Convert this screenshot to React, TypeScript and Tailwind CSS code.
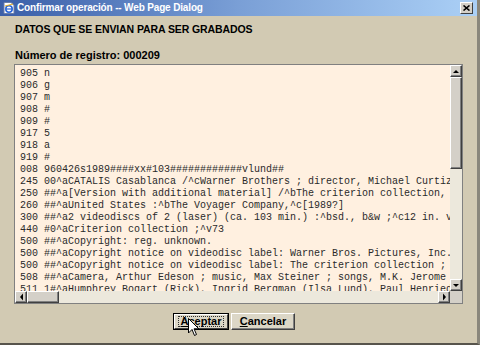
import React from "react";

const lines = [
  "905 n",
  "906 g",
  "907 m",
  "908 #",
  "909 #",
  "917 5",
  "918 a",
  "919 #",
  "008 960426s1989####xx#103############vlund##",
  "245 00^aCATALIS Casablanca /^cWarner Brothers ; director, Michael Curtiz ; screenplay",
  "250 ##^a[Version with additional material] /^bThe criterion collection, 1989",
  "260 ##^aUnited States :^bThe Voyager Company,^c[1989?]",
  "300 ##^a2 videodiscs of 2 (laser) (ca. 103 min.) :^bsd., b&w ;^c12 in. v",
  "440 #0^aCriterion collection ;^v73",
  "500 ##^aCopyright: reg. unknown.",
  "500 ##^aCopyright notice on videodisc label: Warner Bros. Pictures, Inc. 1942",
  "500 ##^aCopyright notice on videodisc label: The criterion collection ; 1989",
  "508 ##^aCamera, Arthur Edeson ; music, Max Steiner ; songs, M.K. Jerome",
  "511 1#^aHumphrey Bogart (Rick), Ingrid Bergman (Ilsa Lund), Paul Henried",
];

const btn3d =
  "border border-t-white border-l-white border-r-[#404040] border-b-[#404040] shadow-[inset_-1px_-1px_0_#808080] bg-[#d4d0c8]";

function Arrow({ dir }: { dir: "up" | "down" | "left" | "right" }) {
  const pts: Record<string, string> = {
    up: "1,4 4,1 7,4",
    down: "1,1 4,4 7,1",
    left: "4,0.5 1,4 4,7.5",
    right: "1,0.5 4,4 1,7.5",
  };
  const w = dir === "up" || dir === "down" ? 8 : 5;
  const h = dir === "up" || dir === "down" ? 5 : 8;
  return (
    <svg width={w} height={h} viewBox={`0 0 ${w} ${h}`}>
      <polygon points={pts[dir]} fill="#000" />
    </svg>
  );
}

export default function App() {
  return (
    <div
      className="relative w-[480px] h-[345px] overflow-hidden bg-[#d2cab3] flex flex-col border-r-[3px] border-r-[#8a877c] border-b-[2px] border-b-[#57544c]"
      style={{ fontFamily: '"Liberation Sans", Arial, sans-serif' }}
    >
      {/* title bar */}
      <div className="h-[16px] shrink-0 flex items-center bg-gradient-to-r from-[#3a5ea8] via-[#7a9fd6] to-[#abd0f6] pl-[3px] pr-[4px]">
        <svg width="12" height="12" viewBox="0 0 12 12" className="shrink-0">
          <path d="M1 0.5h7l3 3v8H1z" fill="#fff" stroke="#6a7da8" strokeWidth="1" />
          <circle cx="6" cy="7" r="3.2" fill="none" stroke="#2a66d8" strokeWidth="1.6" />
          <path d="M3 7h6" stroke="#2a66d8" strokeWidth="1.2" />
          <path d="M2 4 L10 2" stroke="#e7b020" strokeWidth="1" />
        </svg>
        <span className="ml-[2px] text-white text-[10px] font-bold leading-none tracking-[-0.15px]">
          Confirmar operación -- Web Page Dialog
        </span>
        <div className="ml-auto w-[13px] h-[12px] flex items-center justify-center border border-t-white border-l-white border-r-[#404040] border-b-[#404040] bg-[#d4d0c8]">
          <svg width="7" height="6" viewBox="0 0 7 6">
            <path d="M0.5 0.5 L6.5 5.5 M6.5 0.5 L0.5 5.5" stroke="#000" strokeWidth="1.6" />
          </svg>
        </div>
      </div>

      {/* body */}
      <div className="flex flex-col pl-[14px] pr-[13px]">
        <div className="mt-[6px] ml-[1px] h-[14px] text-[10.5px] font-bold leading-[14px] tracking-[-0.1px] text-black">
          DATOS QUE SE ENVIAN PARA SER GRABADOS
        </div>
        <div className="mt-[12px] ml-[1px] h-[14px] text-[11px] font-bold leading-[14px] text-black">
          Número de registro: 000209
        </div>

        {/* text area */}
        <div className="mt-[2px] w-[449px] h-[240px] border border-[#808080] bg-[#fff0e0] flex flex-col">
          <div className="flex h-[226px]">
            <div
              className="flex-1 overflow-hidden pl-[5px] pt-[3px] text-[10px] leading-[12px] text-[#2a2a2a] whitespace-pre"
              style={{ fontFamily: '"Liberation Mono", "Courier New", monospace' }}
            >
              {lines.map((l, i) => (
                <div key={i} className="h-[12px]">
                  {l}
                </div>
              ))}
            </div>
            {/* vertical scrollbar */}
            <div className="w-[12px] flex flex-col bg-[#ece8dc]">
              <div className={`h-[12px] flex items-center justify-center ${btn3d}`}>
                <Arrow dir="up" />
              </div>
              <div className={`h-[92px] ${btn3d}`} />
              <div className="flex-1" />
              <div className={`h-[12px] flex items-center justify-center ${btn3d}`}>
                <Arrow dir="down" />
              </div>
            </div>
          </div>
          {/* horizontal scrollbar */}
          <div className="flex h-[12px] bg-[#ece8dc]">
            <div className={`w-[12px] flex items-center justify-center ${btn3d}`}>
              <Arrow dir="left" />
            </div>
            <div className={`w-[32px] ${btn3d}`} />
            <div className="flex-1" />
            <div className={`w-[12px] flex items-center justify-center ${btn3d}`}>
              <Arrow dir="right" />
            </div>
            <div className="w-[12px] bg-[#d4d0c8]" />
          </div>
        </div>

        {/* buttons */}
        <div className="mt-[9px] flex justify-center gap-[2px] pr-[10px]">
          <div className="w-[56px] h-[17px] border border-black">
            <div className="w-full h-full flex items-center justify-center border border-t-white border-l-white border-r-[#404040] border-b-[#404040] bg-[#dcd7c7]">
              <div className="px-[2px] h-[11px] flex items-center border border-dotted border-[#303030] text-[11px] font-bold leading-none text-black">
                <span className="underline underline-offset-1">A</span>ceptar
              </div>
            </div>
          </div>
          <div className="w-[64px] h-[17px] flex items-center justify-center border border-t-white border-l-white border-r-[#404040] border-b-[#404040] shadow-[inset_-1px_-1px_0_#808080] bg-[#dcd7c7] text-[11px] font-bold leading-none text-black">
            <span className="underline underline-offset-1">C</span>ancelar
          </div>
        </div>
      </div>

      {/* mouse cursor */}
      <svg
        className="absolute left-[188px] top-[318px]"
        width="12"
        height="19"
        viewBox="0 0 12 19"
      >
        <path
          d="M0.5 0.5 L0.5 15 L4 11.5 L6.5 17.5 L8.5 16.5 L6 10.8 L10.8 10.8 Z"
          fill="#fff"
          stroke="#000"
          strokeWidth="1"
        />
      </svg>
    </div>
  );
}
